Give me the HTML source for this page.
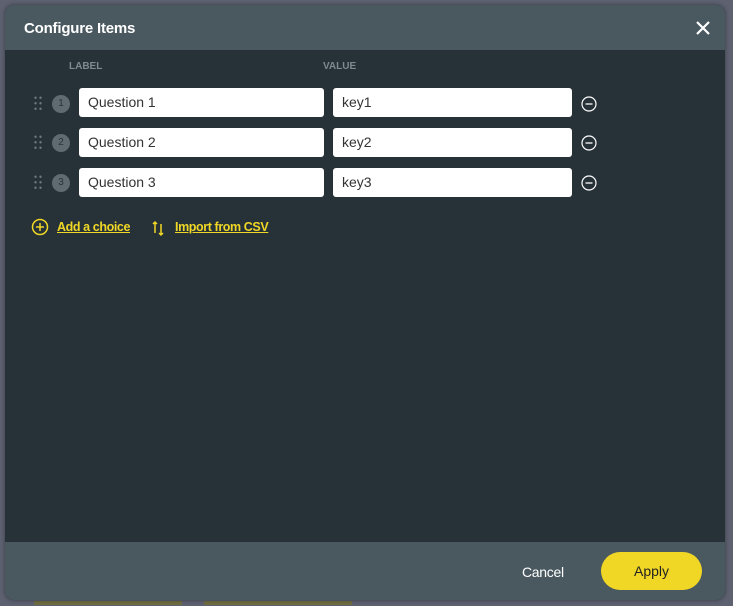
<!DOCTYPE html>
<html><head><style>
body{margin:0;width:733px;height:606px;background:#5d6170;font-family:"Liberation Sans",sans-serif;position:relative;overflow:hidden}
.dlg{position:absolute;left:5px;top:5px;width:720px;height:595px;border-radius:9px;overflow:hidden;background:#263238;box-shadow:0 0 4px rgba(0,0,0,.4)}
.hd{position:absolute;left:0;top:0;width:720px;height:45px;background:#4a5960}
.hd span{position:absolute;left:19px;top:15px;color:#fff;font-weight:bold;font-size:15px;letter-spacing:-0.2px}
.ft{position:absolute;left:0;top:537px;width:720px;height:58px;background:#4a5960}
.col{position:absolute;top:56px;color:#7d8a90;font-size:10px;font-weight:bold}
.in{position:absolute;height:29px;background:#fff;border-radius:3px;box-sizing:border-box;padding-left:9px;line-height:29px;font-size:14px;color:#333}
.num{position:absolute;width:18px;height:18px;border-radius:50%;background:#5f6b71;color:#263238;font-size:10px;text-align:center;line-height:18px}
.dots{position:absolute;width:10px;height:16px;background-image:radial-gradient(circle,#6b777d 1px,transparent 1.4px);background-size:5px 5.5px}
.lnk{position:absolute;top:215px;color:#f0d726;font-weight:bold;font-size:12.5px;letter-spacing:-0.4px;text-decoration:underline}
</style></head><body>
<div style="position:absolute;left:34px;top:601px;width:148px;height:4px;background:#6e6c40"></div>
<div style="position:absolute;left:204px;top:601px;width:148px;height:4px;background:#6e6c40"></div>
<div class="dlg">
<div class="hd"><span>Configure Items</span>
<svg style="position:absolute;left:690px;top:15px" width="16" height="16"><path d="M2 2L14 14M14 2L2 14" stroke="#fff" stroke-width="2.2"/></svg></div>
<div class="col" style="left:64px">LABEL</div>
<div class="col" style="left:318px">VALUE</div>

<div class="dots" style="left:28px;top:90px"></div><div class="num" style="left:47px;top:90px">1</div>
<div class="in" style="left:74px;top:83px;width:245px">Question 1</div>
<div class="in" style="left:328px;top:83px;width:239px">key1</div>
<svg style="position:absolute;left:576px;top:91px" width="16" height="16"><circle cx="8" cy="8" r="7" fill="none" stroke="#fff" stroke-width="1.2"/><path d="M4.5 8h7" stroke="#fff" stroke-width="1.3"/></svg>

<div class="dots" style="left:28px;top:129px"></div><div class="num" style="left:47px;top:129px">2</div>
<div class="in" style="left:74px;top:123px;width:245px">Question 2</div>
<div class="in" style="left:328px;top:123px;width:239px">key2</div>
<svg style="position:absolute;left:576px;top:130px" width="16" height="16"><circle cx="8" cy="8" r="7" fill="none" stroke="#fff" stroke-width="1.2"/><path d="M4.5 8h7" stroke="#fff" stroke-width="1.3"/></svg>

<div class="dots" style="left:28px;top:169px"></div><div class="num" style="left:47px;top:169px">3</div>
<div class="in" style="left:74px;top:163px;width:245px">Question 3</div>
<div class="in" style="left:328px;top:163px;width:239px">key3</div>
<svg style="position:absolute;left:576px;top:170px" width="16" height="16"><circle cx="8" cy="8" r="7" fill="none" stroke="#fff" stroke-width="1.2"/><path d="M4.5 8h7" stroke="#fff" stroke-width="1.3"/></svg>

<svg style="position:absolute;left:26px;top:213px" width="18" height="18"><circle cx="9" cy="9" r="7.5" fill="none" stroke="#f0d726" stroke-width="1.5"/><path d="M9 5v8M5 9h8" stroke="#f0d726" stroke-width="1.5"/></svg>
<div class="lnk" style="left:52px">Add a choice</div>
<svg style="position:absolute;left:146px;top:214px" width="16" height="18"><path d="M4 14V3M2 5L4 3l2 2M10 5v11M8 14l2 2 2-2" stroke="#f0d726" stroke-width="1.5" fill="none"/></svg>
<div class="lnk" style="left:170px">Import from CSV</div>

<div class="ft">
<span style="position:absolute;left:517px;top:22px;color:#fff;font-size:14px;letter-spacing:-0.3px">Cancel</span>
<div style="position:absolute;left:596px;top:10px;width:101px;height:38px;border-radius:19px;background:#f0d726;text-align:center;line-height:38px;font-size:14px;color:#222">Apply</div>
</div>
</div>
</body></html>
